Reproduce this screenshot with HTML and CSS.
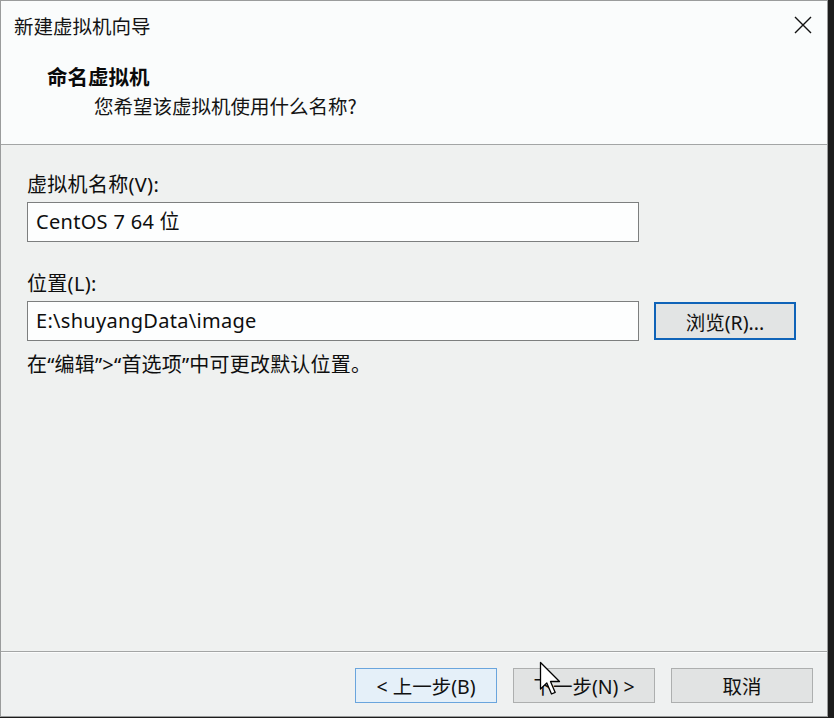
FILE: index.html
```html
<!DOCTYPE html>
<html lang="zh-CN">
<head>
<meta charset="utf-8">
<title>新建虚拟机向导</title>
<link rel="stylesheet" href="styles.css">
</head>
<body>
<div class="window">
  <div class="header">
    <div class="titlebar">
      <span class="title">新建虚拟机向导</span>
      <svg class="close" width="18" height="18" viewBox="0 0 18 18"><path d="M1 1 L17 17 M17 1 L1 17" stroke="#111" stroke-width="1.4" fill="none"/></svg>
    </div>
    <div class="heading">命名虚拟机</div>
    <div class="subtitle">您希望该虚拟机使用什么名称?</div>
  </div>
  <div class="content">
    <div class="label">虚拟机名称(V):</div>
    <div class="field">CentOS 7 64 位</div>
    <div class="label label2">位置(L):</div>
    <div class="row">
      <div class="field">E:\shuyangData\image</div>
      <div class="btn browse">浏览(R)...</div>
    </div>
    <div class="hint">在“编辑”&gt;“首选项”中可更改默认位置。</div>
  </div>
  <div class="footer">
    <div class="btn back">&lt; 上一步(B)</div>
    <div class="btn">下一步(N) &gt;</div>
    <div class="btn">取消</div>
  </div>
  <svg class="cursor" width="24" height="36" viewBox="0 0 24 36"><path d="M1.5 1.5 L1.5 28 L7.8 22 L12.5 33 L16.2 31.4 L11.5 20.5 L20.5 20.5 Z" fill="#fff" stroke="#000" stroke-width="1.3" stroke-linejoin="round"/></svg>
</div>
</body>
</html>
```

FILE: styles.css
```css
* { box-sizing: border-box; }
html, body { margin: 0; padding: 0; }
body {
  width: 834px;
  height: 718px;
  overflow: hidden;
  background: #1c1c1c;
  font-family: "Noto Sans", "Noto Sans CJK SC", sans-serif;
  font-size: 20px;
  color: #0e0e0e;
}
.window {
  position: relative;
  width: 828px;
  height: 717px;
  border: 1px solid #9a9c9c;
  display: flex;
  flex-direction: column;
  background: #eff1f0;
}
.header {
  height: 144px;
  background: #fafcfc;
  border-bottom: 1px solid #a3a5a5;
  flex: none;
}
.titlebar {
  height: 48px;
  display: flex;
  align-items: center;
  justify-content: space-between;
  padding: 0 15px 0 13px;
}
.title {
  font-family: "Noto Sans CJK SC", sans-serif;
  font-size: 19.5px;
  color: #141414;
}
.close { margin-top: -1px; }
.heading {
  margin-top: 12px;
  padding-left: 46px;
  line-height: 30px;
  font-family: "Noto Sans CJK SC", sans-serif;
  font-weight: bold;
  font-size: 20.5px;
  color: #0a0a0a;
}
.subtitle {
  padding-left: 93px;
  line-height: 30px;
  font-family: "Noto Sans CJK SC", sans-serif;
  font-size: 19.5px;
  color: #141414;
}
.content {
  flex: 1;
  padding: 28px 0 0 26px;
  background: #eff1f0;
}
.label {
  line-height: 24px;
  margin-bottom: 5px;
  letter-spacing: 0.3px;
}
.label2 { margin-top: 30px; }
.field {
  width: 612px;
  height: 40px;
  background: #fdfefe;
  border: 1px solid #7d7f7f;
  padding: 0 8px;
  display: flex;
  align-items: center;
  line-height: 24px;
  letter-spacing: 0.3px;
}
.row {
  display: flex;
  align-items: center;
  gap: 15px;
}
.btn {
  width: 142px;
  height: 35px;
  background: #e1e3e3;
  border: 1px solid #adafaf;
  display: flex;
  align-items: center;
  justify-content: center;
  font-size: 19.5px;
  color: #111;
}
.browse {
  height: 38px;
  border: 2px solid #0f63b8;
  background: #e2e4e4;
}
.back {
  background: #e5f0f9;
  border-color: #6aa5dd;
}
.hint {
  margin-top: 12px;
  line-height: 24px;
  letter-spacing: 0.2px;
}
.footer {
  height: 65px;
  flex: none;
  border-top: 1px solid #a3a5a5;
  box-shadow: inset 0 1px 0 #fbfcfc;
  background: #eff1f1;
  display: flex;
  justify-content: flex-end;
  gap: 16px;
  padding: 16px 14px 0 0;
}
.cursor {
  position: absolute;
  left: 538px;
  top: 660px;
}
```
